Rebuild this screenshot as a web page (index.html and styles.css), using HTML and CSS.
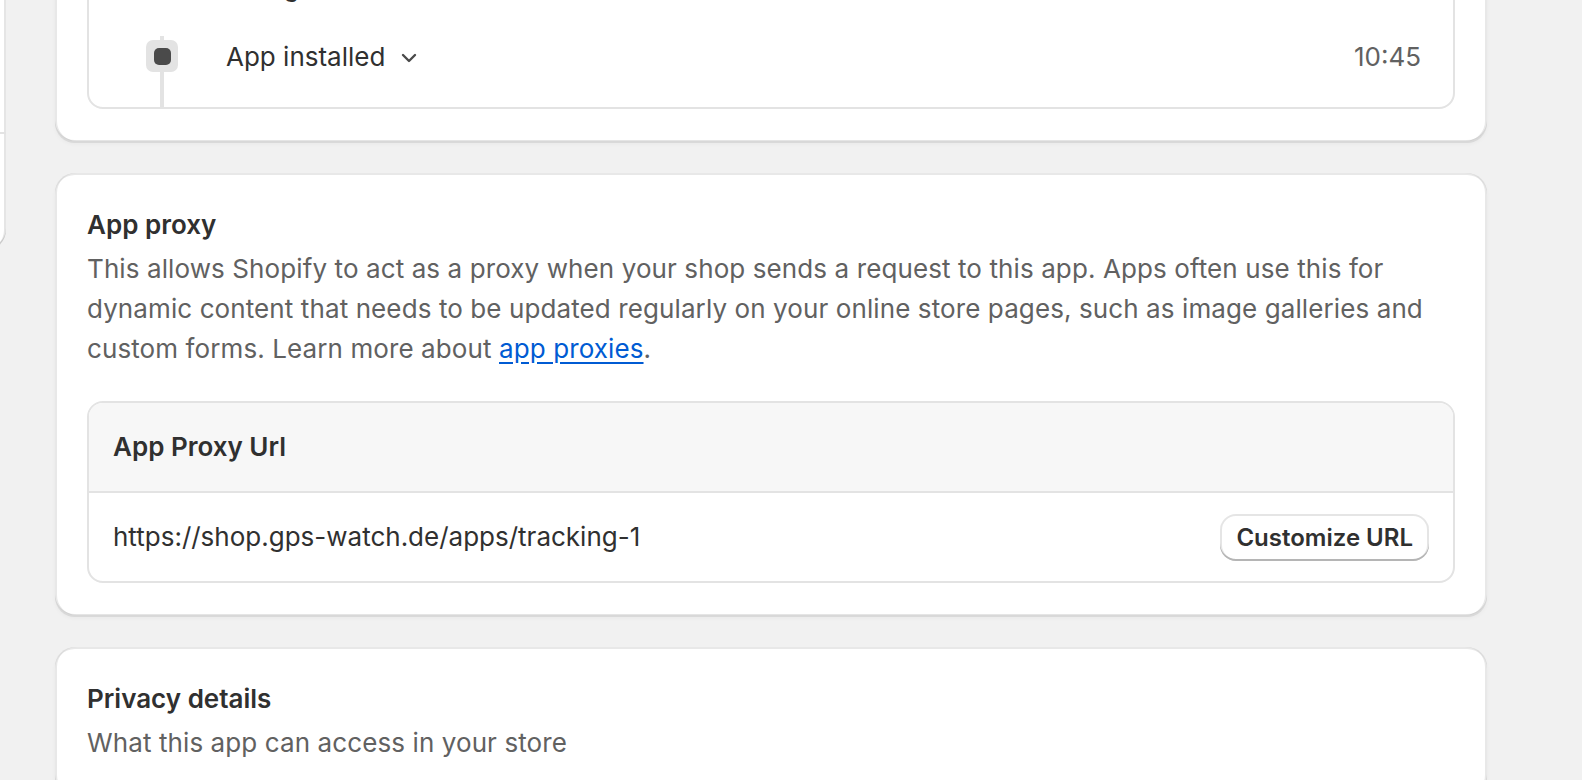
FILE: index.html
```html
<!DOCTYPE html>
<html lang="en">
<head>
    <meta charset="UTF-8">
    <meta name="viewport" content="width=device-width, initial-scale=1.0">
    <title>App settings</title>
    <link rel="stylesheet" href="styles.css">
</head>
<body>
    <div class="layout">
        <div class="sidebar">
            <div class="sidebar-card">
                <div class="sidebar-section top"></div>
                <div class="sidebar-section"></div>
            </div>
        </div>

        <div class="main">
            <!-- App history -->
            <div class="card">
                <div class="timeline">
                    <div class="tl-row first">
                        <div class="tl-marker">
                            <span class="tl-stem-top"></span>
                            <span class="tl-icon"><span class="tl-dot"></span></span>
                            <span class="tl-stem"></span>
                        </div>
                        <div class="tl-content">
                            <span class="tl-title">Billing confirmed</span>
                        </div>
                    </div>
                    <div class="tl-row last">
                        <div class="tl-marker">
                            <span class="tl-stem-top"></span>
                            <span class="tl-icon"><span class="tl-dot"></span></span>
                            <span class="tl-stem"></span>
                        </div>
                        <div class="tl-content">
                            <span class="tl-title">App installed
                                <svg class="chevron" viewBox="0 0 16 10" width="16" height="10"><polyline points="2,2 8,8 14,2" fill="none" stroke="#4a4a4a" stroke-width="2.4" stroke-linecap="round" stroke-linejoin="round"/></svg>
                            </span>
                            <span class="tl-time">10:45</span>
                        </div>
                    </div>
                </div>
            </div>

            <!-- App proxy -->
            <div class="card">
                <h2 class="card-title">App proxy</h2>
                <p class="card-text">This allows Shopify to act as a proxy when your shop sends a request to this app. Apps often use this for dynamic content that needs to be updated regularly on your online store pages, such as image galleries and custom forms. Learn more about <a href="#">app proxies</a>.</p>

                <div class="table">
                    <div class="table-head">App Proxy Url</div>
                    <div class="table-row">
                        <span>https://shop.gps-watch.de/apps/tracking-1</span>
                        <button class="btn">Customize URL</button>
                    </div>
                </div>
            </div>

            <!-- Privacy -->
            <div class="card">
                <h2 class="card-title">Privacy details</h2>
                <p class="card-text">What this app can access in your store</p>
            </div>
        </div>
    </div>
</body>
</html>
```

FILE: styles.css
```css
body {
    margin: 0;
    background-color: #f1f1f1;
    font-family: Inter, "Noto Sans", sans-serif;
    font-size: 26px;
    line-height: 40px;
    color: #303030;
    overflow: hidden;
}

.layout {
    display: flex;
    gap: 49px;
    margin-top: -111px;
}

.sidebar {
    width: 6px;
    flex: none;
    overflow: hidden;
    display: flex;
    justify-content: flex-end;
}
.sidebar-card {
    flex: none;
    width: 300px;
    height: 361px;
    background-color: #fff;
    border-radius: 0 20px 20px 0;
    box-shadow: inset -2px 0 0 rgba(0, 0, 0, 0.1), inset 0 -2px 0 rgba(0, 0, 0, 0.12);
}
.sidebar-section.top {
    height: 243px;
    border-bottom: 2px solid #e3e3e3;
}

.main {
    width: 1432px;
    flex: none;
    display: flex;
    flex-direction: column;
    gap: 32px;
}

.card {
    background-color: #fff;
    border-radius: 20px;
    padding: 32px;
    box-shadow: 0 2px 0 rgba(26, 26, 26, 0.08),
        0 3px 4px rgba(26, 26, 26, 0.04),
        inset 0 2px 0 rgba(204, 204, 204, 0.45),
        inset 0 -1px 0 rgba(0, 0, 0, 0.1),
        inset 2px 0 0 rgba(0, 0, 0, 0.09),
        inset -2px 0 0 rgba(0, 0, 0, 0.09);
}
.card-title {
    margin: 0;
    font-size: 26px;
    line-height: 40px;
    font-weight: 600;
}
.card-text {
    margin: 4px 0 0;
    color: #616161;
    letter-spacing: 0.1px;
}
.card-text a {
    color: #005bd3;
    text-decoration: underline;
    text-underline-offset: 4px;
}

/* timeline */
.timeline {
    border: 2px solid #e3e3e3;
    border-radius: 16px;
    padding-top: 19px;
}
.tl-row {
    display: flex;
    gap: 48px;
    min-height: 80px;
    padding: 0 32px 0 57px;
}
.tl-row.last {
    min-height: 85px;
}
.tl-row.first .tl-stem {
    visibility: hidden;
}
.tl-marker {
    width: 32px;
    flex: none;
    display: flex;
    flex-direction: column;
    align-items: center;
}
.tl-stem-top {
    width: 4px;
    height: 4px;
    margin-top: 14px;
    background-color: #e3e3e3;
}
.tl-icon {
    width: 32px;
    height: 32px;
    border-radius: 7px;
    background-color: #e3e3e3;
    display: flex;
    align-items: center;
    justify-content: center;
}
.tl-dot {
    width: 17px;
    height: 17px;
    border-radius: 5px;
    background-color: #4a4a4a;
}
.tl-stem {
    width: 4px;
    flex: 1;
    background-color: #e3e3e3;
}
.tl-content {
    flex: 1;
    display: flex;
    justify-content: space-between;
    align-items: center;
    height: 40px;
    margin-top: 15px;
}
.tl-row.first .tl-content {
    margin-top: 25px;
}
.tl-title {
    display: flex;
    align-items: center;
    gap: 16px;
}
.chevron {
    margin-top: 2px;
}
.tl-time {
    color: #616161;
}

/* proxy table */
.table {
    margin-top: 32px;
    border: 2px solid #e3e3e3;
    border-radius: 16px;
    overflow: hidden;
}
.table-head {
    height: 88px;
    display: flex;
    align-items: center;
    padding: 0 24px;
    background-color: #f7f7f7;
    border-bottom: 2px solid #e3e3e3;
    font-weight: 600;
}
.table-row {
    height: 88px;
    display: flex;
    align-items: center;
    justify-content: space-between;
    padding: 0 24px;
}
.btn {
    font-family: inherit;
    font-size: 24px;
    font-weight: 600;
    color: #303030;
    background-color: #fff;
    border: none;
    border-radius: 16px;
    height: 47px;
    padding: 0 16px;
    cursor: pointer;
    box-shadow: inset 0 -2px 0 #b5b5b5, inset 0 0 0 2px rgba(0, 0, 0, 0.1);
}
```
